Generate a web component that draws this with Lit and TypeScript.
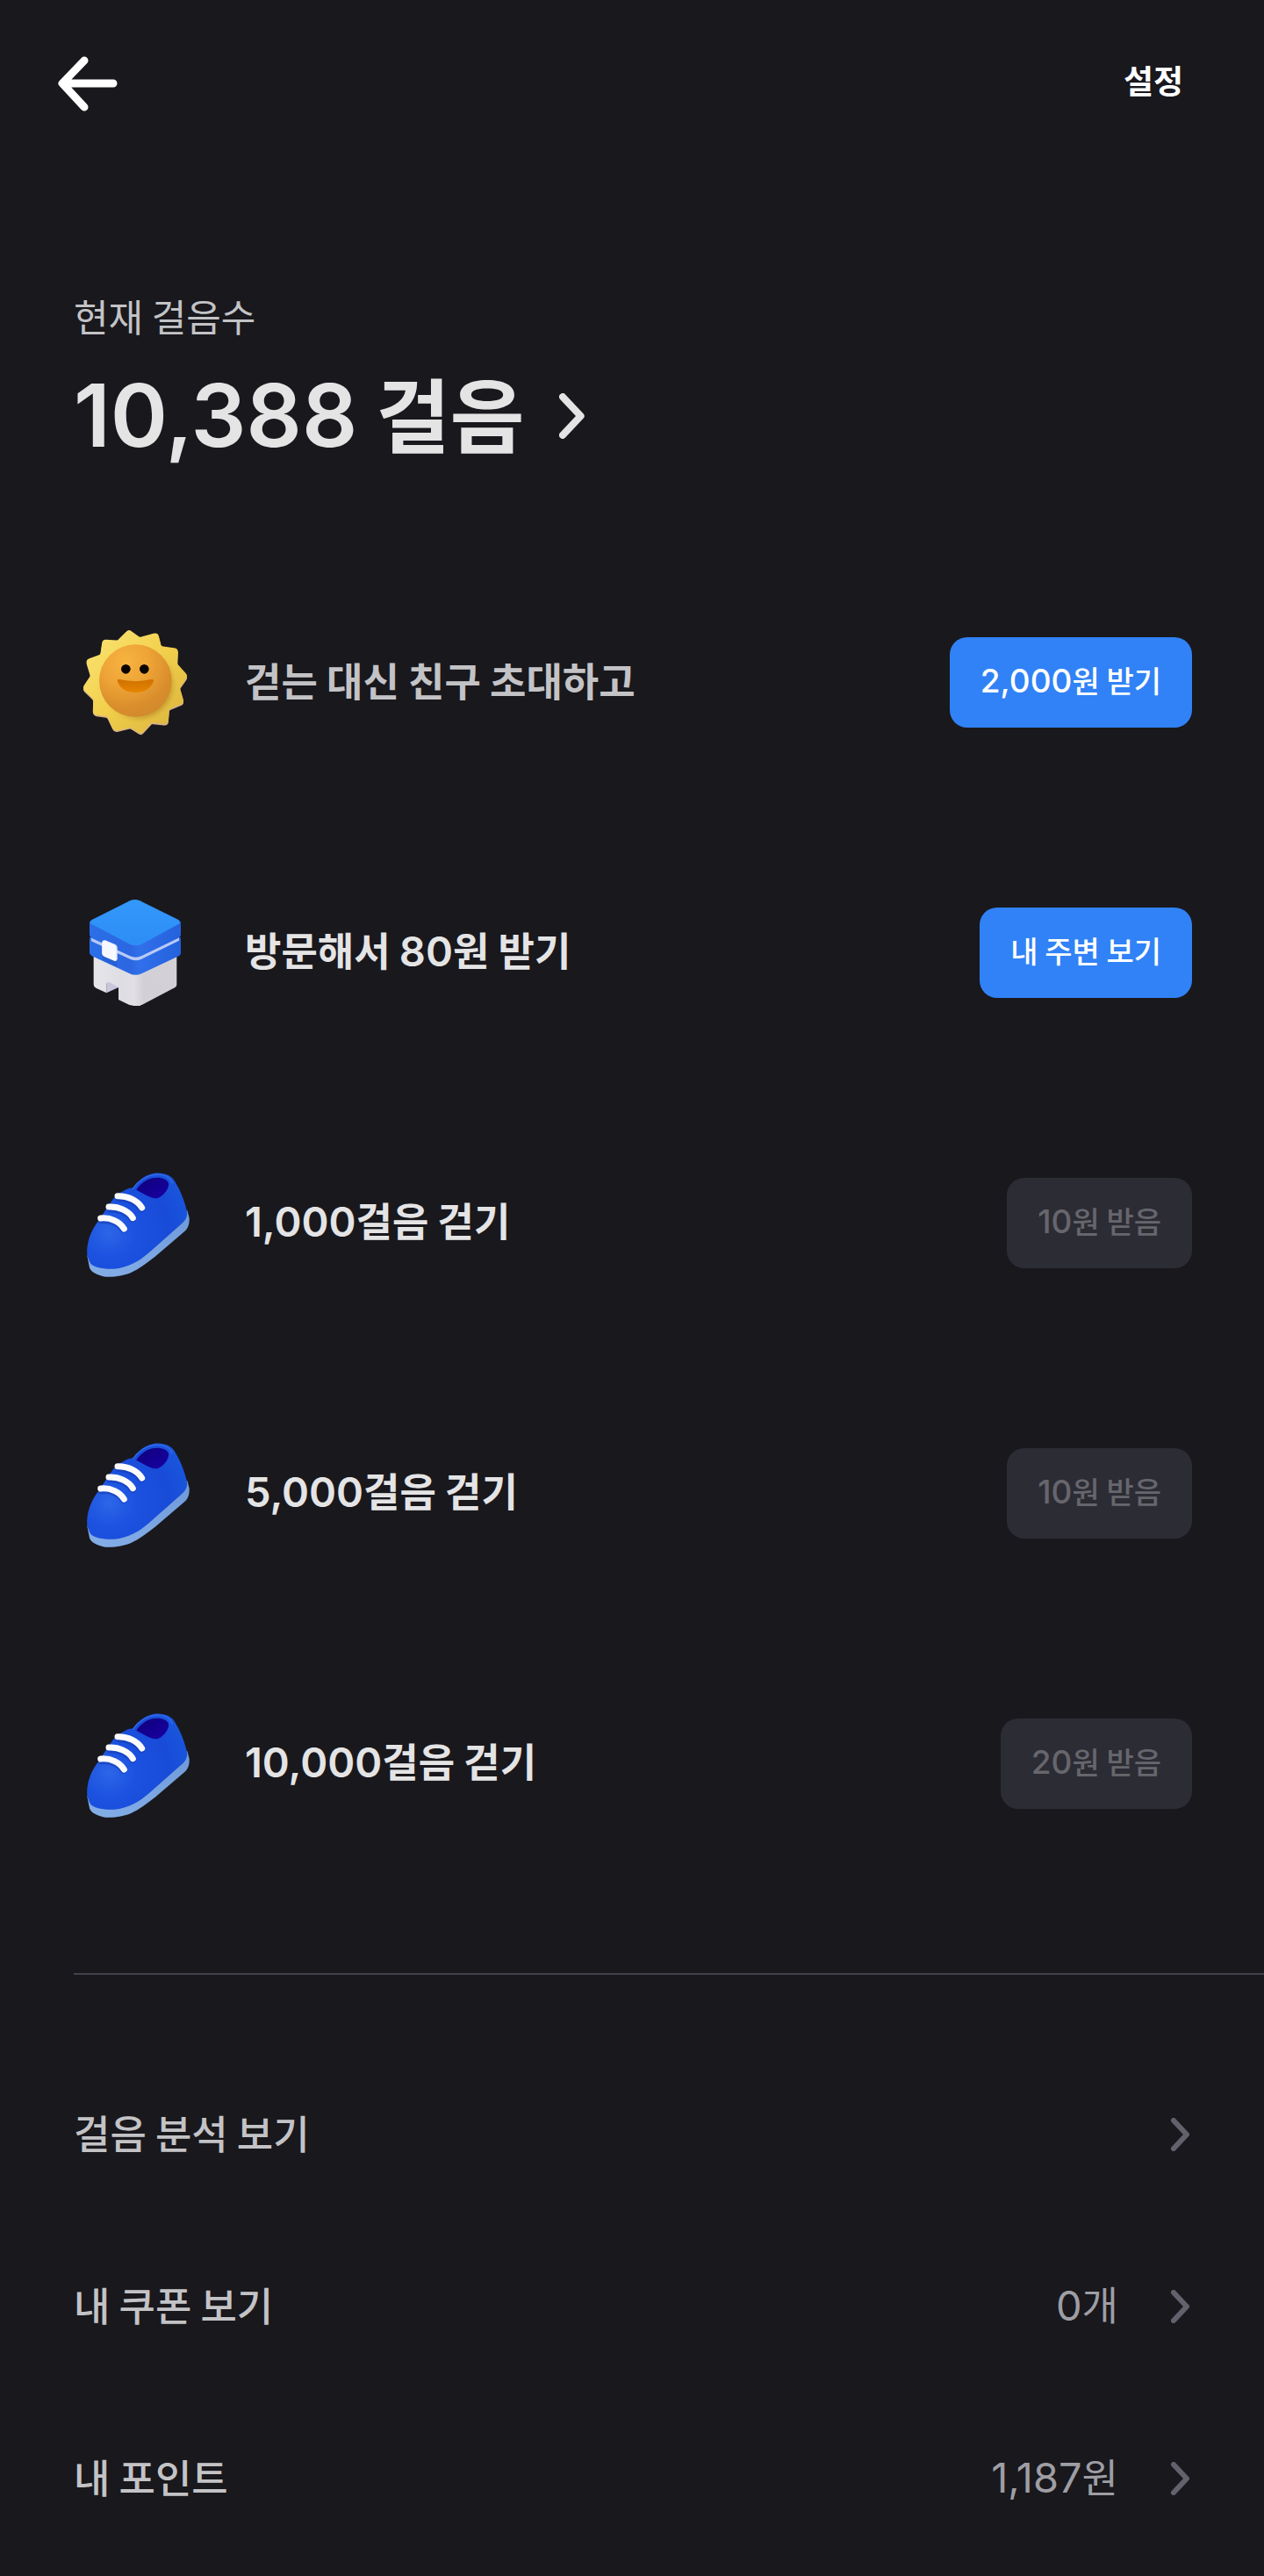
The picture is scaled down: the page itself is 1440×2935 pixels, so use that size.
import { LitElement, html, css, svg } from "lit";
import { customElement, property } from "lit/decorators.js";

/* Numerals run slightly larger than the Hangul beside them. */
const mixed = (text: string) =>
  text.split(/([\d,]+)/).filter(Boolean).map((part) =>
    /\d/.test(part) ? html`<span class="num">${part}</span>` : part);

/* Outline of the sun: tips and valleys alternate, tips are rounded more. */
const sunPoints = () => {
  const pts = [
    [200, 58], [237, 86], [297, 70], [310, 116], [366, 124], [364, 175], [400, 216], [372, 256],
    [387, 306], [337, 326], [332, 378], [278, 372], [242, 412], [206, 388], [152, 402],
    [128, 352], [80, 344], [81, 294], [44, 256], [72, 214], [56, 162], [105, 144], [112, 94], [164, 96],
  ];
  const n = pts.length;
  let d = "";
  for (let i = 0; i < n; i++) {
    const p = pts[i];
    const a = pts[(i + n - 1) % n];
    const b = pts[(i + 1) % n];
    const r = i % 2 === 0 ? 0.2 : 0.12;
    const mix = (q: number[]) => `${Math.round(p[0] + (q[0] - p[0]) * r)} ${Math.round(p[1] + (q[1] - p[1]) * r)}`;
    d += `${i ? "L" : "M"}${mix(a)} Q${p[0]} ${p[1]} ${mix(b)} `;
  }
  return d + "Z";
};

const sun = svg`
  <defs>
    <linearGradient id="rays" x1="0" y1="0" x2="1" y2="1">
      <stop offset="0" stop-color="#fbe676"/><stop offset=".5" stop-color="#f2cf4c"/><stop offset="1" stop-color="#d8b23c"/>
    </linearGradient>
    <radialGradient id="face" cx=".36" cy=".24" r=".85">
      <stop offset="0" stop-color="#f7b440"/><stop offset=".4" stop-color="#eea336"/><stop offset=".75" stop-color="#d98e2c"/><stop offset="1" stop-color="#cf882c"/>
    </radialGradient>
    <linearGradient id="mouth" x1="0" y1="0" x2="0" y2="1">
      <stop offset="0" stop-color="#cf7100"/><stop offset="1" stop-color="#e68600"/>
    </linearGradient>
    <linearGradient id="cast" x1="0" y1="0" x2="1" y2="1">
      <stop offset=".45" stop-color="#a8791c" stop-opacity="0"/><stop offset=".8" stop-color="#a8791c" stop-opacity=".45"/>
    </linearGradient>
    <filter id="soft"><feGaussianBlur stdDeviation="7"/></filter>
  </defs>
  <path d=${sunPoints()} fill="#d6b489" stroke="#d6b489" stroke-width="5" stroke-linejoin="round" transform="translate(0 3)"/>
  <path d=${sunPoints()} fill="url(#rays)" stroke="url(#rays)" stroke-width="5" stroke-linejoin="round" transform="translate(0 -2)"/>
  <circle cx="230" cy="238" r="124" fill="url(#cast)" filter="url(#soft)"/>
  <circle cx="223" cy="230" r="124" fill="url(#face)"/>
  <circle cx="190" cy="190" r="16" fill="#0a0300"/>
  <circle cx="253" cy="190" r="16" fill="#0a0300"/>
  <path d="M161 230Q161 224 168 225Q223 238 278 225Q285 224 285 231C276 258 252 270 223 270C194 270 168 256 161 230Z" fill="url(#mouth)"/>`;

const shop = svg`
  <defs>
    <linearGradient id="wallL" x1="0" y1="0" x2="1" y2="0">
      <stop offset="0" stop-color="#e6e6ea"/><stop offset=".6" stop-color="#dedde4"/><stop offset="1" stop-color="#e3e1e5"/>
    </linearGradient>
    <linearGradient id="wallR" x1="0" y1="0" x2="1" y2="0">
      <stop offset="0" stop-color="#e3e1e5"/><stop offset=".25" stop-color="#d2d0d6"/><stop offset="1" stop-color="#d3d1d6"/>
    </linearGradient>
    <linearGradient id="band" x1="0" y1="0" x2="1" y2="0">
      <stop offset="0" stop-color="#2b6fe8"/><stop offset=".45" stop-color="#2c66e0"/><stop offset=".55" stop-color="#3170ea"/><stop offset="1" stop-color="#2461dc"/>
    </linearGradient>
    <linearGradient id="lid" x1="0" y1="0" x2="0" y2="1">
      <stop offset="0" stop-color="#3398fb"/><stop offset="1" stop-color="#2d8df6"/>
    </linearGradient>
  </defs>
  <path d="M124 367V330L140 324L165 340V348Z" fill="#c9c6dc"/>
  <path d="M80 230L240 300V411Q208 412 196 405L165 390V348L138 332Q124 326 124 340V367L88 350Q80 346 80 338Z" fill="url(#wallL)"/>
  <path d="M215 290L364 225V338Q364 345 357 349L246 407Q234 412 216 411Z" fill="url(#wallR)"/>
  <path d="M66 182Q66 174 76 176L222 250L368 176Q378 174 378 182V230Q378 237 371 241L244 301Q222 311 200 299L73 240Q66 236 66 229Z" fill="url(#band)"/>
  <path d="M72 176L222 236L372 174V188L242 252Q224 260 204 251L72 190Z" fill="#b9caf7"/>
  <path d="M66 124H378V168Q378 175 370 179L243 241Q224 250 203 240L74 180Q66 176 66 168Z" fill="url(#band)"/>
  <path d="M74 117L204 52Q221 44 238 52L370 117Q380 124 370 132L244 200Q224 210 203 200L74 132Q62 124 74 117Z" fill="url(#lid)"/>
  <path d="M160 234V278L110 254V226Z" fill="#1d50bd" opacity=".35"/>
  <path d="M109 196Q109 185 120 187L152 200Q161 204 161 213V249Q160 260 150 257L118 243Q109 239 109 230Z" fill="#e4eafa"/>
  <path d="M109 196Q109 187 120 190L148 202Q156 206 156 214V258L118 243Q109 239 109 230Z" fill="#f6f8ff"/>`;

const shoe = svg`
  <defs>
    <radialGradient id="body" cx=".22" cy=".62" r=".85">
      <stop offset="0" stop-color="#2c66e8"/><stop offset=".3" stop-color="#1c52e0"/><stop offset=".7" stop-color="#184bd8"/><stop offset="1" stop-color="#1a56dc"/>
    </radialGradient>
    <linearGradient id="sole" x1="0" y1="1" x2="1" y2="0">
      <stop offset="0" stop-color="#84aee6"/><stop offset=".5" stop-color="#7ba6e2"/><stop offset="1" stop-color="#6f98d8"/>
    </linearGradient>
    <linearGradient id="hole" x1="0" y1="0" x2="1" y2="1">
      <stop offset="0" stop-color="#10007a"/><stop offset="1" stop-color="#1800a4"/>
    </linearGradient>
  </defs>
  <path d="M58 335L66 376C72 392 92 402 120 407C150 409 184 403 206 394C236 380 262 360 290 338L390 253C402 242 408 228 407 206L400 180Z" fill="url(#sole)"/>
  <path d="M58 335C54 292 70 250 98 214L128 168L156 128L194 107Q206 102 214 104C232 80 254 60 284 54C318 49 346 60 358 82C374 108 390 144 399 184C402 204 392 218 376 230L270 324C236 354 198 376 150 380C112 382 76 374 68 360Z" fill="url(#body)"/>
  <path d="M214 106C228 84 256 62 288 58C318 54 342 66 348 86" fill="none" stroke="#2d66e6" stroke-width="5" stroke-linecap="round"/>
  <path d="M226 110C238 92 256 76 280 70C306 64 330 72 336 86C340 104 320 128 302 137C290 142 274 136 262 130Q242 118 226 110Z" fill="url(#hole)"/>
  <g fill="none" stroke-linecap="round">
    <g stroke="#1238a8" stroke-width="22" opacity=".5">
      <path d="M166 139C196 140 226 152 244 176"/><path d="M136 176C166 176 196 188 213 210"/><path d="M106 215C138 210 168 226 182 247"/>
    </g>
    <g stroke="#fbfafc" stroke-width="21">
      <path d="M162 131C196 130 230 146 245 171"/><path d="M132 168C166 166 200 182 214 206"/><path d="M104 207C138 203 170 220 184 243"/>
    </g>
  </g>`;

const art: Record<string, { box: string; shape: unknown }> = {
  sun: { box: "0 9 450 450", shape: sun },
  shop: { box: "0 3 450 450", shape: shop },
  shoe: { box: "0 -3 450 450", shape: shoe },
};

const base = css`
  * { box-sizing: border-box; }
  button, a { font: inherit; color: inherit; text-decoration: none; }
  button { border: 0; margin: 0; background: none; cursor: pointer; }
  .num { font-family: Inter, "Noto Sans CJK KR", sans-serif; }
`;

const chevron = html`<svg class="chevron" viewBox="0 0 22 38" aria-hidden="true">
  <path d="M3 3L18 19L3 35" fill="none" stroke="currentColor" stroke-width="6" stroke-linecap="round" stroke-linejoin="round"/>
</svg>`;

@customElement("mission-row")
class MissionRow extends LitElement {
  @property() icon = "shoe";
  @property() label = "";
  @property() action = "";
  @property({ type: Boolean }) muted = false;
  @property({ type: Boolean }) done = false;

  static styles = [base, css`
    :host { display: block; }
    .row { display: flex; align-items: center; height: 148px; }
    .art { width: 150px; height: 150px; flex: none; margin-right: 49px; }
    .label { flex: 1; padding-bottom: 4px; font-size: 45px; line-height: 60px; font-weight: 600; color: #e4e4e5; }
    .label .num { font-size: 47px; }
    .muted { color: #c3c3c6; }
    .action {
      height: 103px; padding: 0 35px 4px; border-radius: 20px; white-space: nowrap;
      background: #3182f6; color: #fff; font-size: 34px; line-height: 48px; font-weight: 500;
    }
    .action .num { font-size: 37px; }
    .action:disabled { background: #2c2c35; color: #66666c; cursor: default; }
  `];

  render() {
    const { box, shape } = art[this.icon];
    return html`<div class="row">
      <svg class="art" viewBox=${box} aria-hidden="true">${shape}</svg>
      <span class="label ${this.muted ? "muted" : ""}">${mixed(this.label)}</span>
      <button class="action" type="button" ?disabled=${this.done}>${mixed(this.action)}</button>
    </div>`;
  }
}

@customElement("menu-link")
class MenuLink extends LitElement {
  @property() label = "";
  @property() value = "";

  static styles = [base, css`
    :host { display: block; }
    .link { display: flex; align-items: center; height: 196px; font-size: 45px; line-height: 60px; font-weight: 500; color: #c3c3c6; }
    .label, .value { padding-bottom: 4px; }
    .label { flex: 1; }
    .value { color: #9e9ea4; font-weight: 400; }
    .value .num { font-size: 47px; }
    .chevron { width: 22px; height: 38px; margin-left: 60px; color: #62626d; }
  `];

  render() {
    return html`<a class="link" href="#">
      <span class="label">${this.label}</span>
      <span class="value">${mixed(this.value)}</span>
      ${chevron}
    </a>`;
  }
}

@customElement("app-root")
class AppRoot extends LitElement {
  static styles = [base, css`
    :host {
      display: block; min-height: 100vh; background: #19181d; color: #e4e4e5;
      font-family: "Noto Sans CJK KR", sans-serif;
    }
    .bar { display: flex; align-items: center; justify-content: space-between; height: 190px; padding: 0 92px 0 64px; }
    .back { width: 70px; height: 64px; padding: 0; color: #fff; }
    .back svg { display: block; width: 70px; height: 64px; }
    .settings { padding: 0 0 8px; color: #fff; font-size: 37px; line-height: 48px; font-weight: 600; }
    .summary { padding: 139px 84px 0; }
    .caption { margin: 0; font-size: 43px; line-height: 60px; color: #c3c3c6; }
    .total { display: inline-flex; align-items: center; margin-top: 14px; }
    .count { margin: 0; padding-bottom: 6px; font-size: 92px; line-height: 132px; font-weight: 600; }
    .count .num { font-size: 99px; }
    .total .chevron { width: 30px; height: 52px; margin-left: 40px; }
    .missions { display: grid; gap: 160px; padding: 158px 82px 0 80px; }
    .rule { margin: 165px 0 0 84px; border: 0; border-top: 2px solid #42424b; }
    .menu { padding: 84px 84px 0; }
  `];

  render() {
    return html`
      <header class="bar">
        <button class="back" type="button" aria-label="뒤로">
          <svg viewBox="0 0 70 64" aria-hidden="true"><path d="M32 6L7 32L32 59M8 32H65" fill="none" stroke="currentColor" stroke-width="9" stroke-linecap="round" stroke-linejoin="round"/></svg>
        </button>
        <button class="settings" type="button">설정</button>
      </header>
      <main>
        <section class="summary">
          <p class="caption">현재 걸음수</p>
          <a class="total" href="#"><h1 class="count">${mixed("10,388 걸음")}</h1>${chevron}</a>
        </section>
        <section class="missions">
          <mission-row icon="sun" label="걷는 대신 친구 초대하고" action="2,000원 받기" muted></mission-row>
          <mission-row icon="shop" label="방문해서 80원 받기" action="내 주변 보기"></mission-row>
          <mission-row label="1,000걸음 걷기" action="10원 받음" done></mission-row>
          <mission-row label="5,000걸음 걷기" action="10원 받음" done></mission-row>
          <mission-row label="10,000걸음 걷기" action="20원 받음" done></mission-row>
        </section>
        <hr class="rule">
        <nav class="menu">
          <menu-link label="걸음 분석 보기"></menu-link>
          <menu-link label="내 쿠폰 보기" value="0개"></menu-link>
          <menu-link label="내 포인트" value="1,187원"></menu-link>
        </nav>
      </main>`;
  }
}
